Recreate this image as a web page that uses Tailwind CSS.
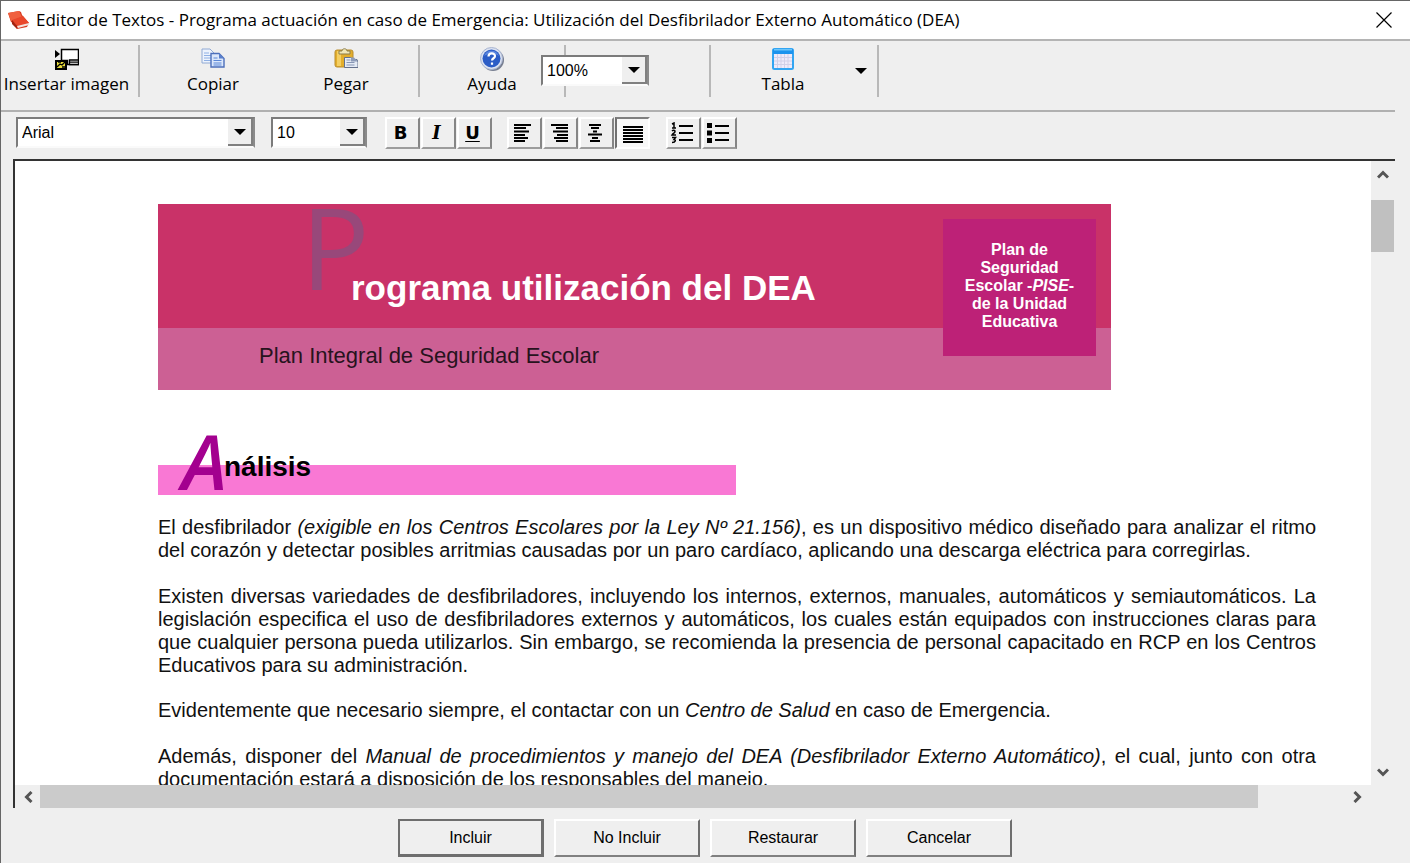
<!DOCTYPE html>
<html lang="es">
<head>
    <meta charset="UTF-8">
    <meta name="viewport" content="width=device-width, initial-scale=1.0">
    <title>Editor de Textos</title>
    <script src="https://cdn.jsdelivr.net/npm/@tailwindcss/browser@4"></script>
</head>
<body class="h-screen flex flex-col overflow-hidden bg-[#efefef] border-t border-l border-[#666] text-black font-['Liberation_Sans',Arial,sans-serif]">
    <!-- Title bar -->
    <header class="h-10 shrink-0 flex items-center justify-between bg-white border-b-2 border-[#b4b4b4] pl-1.5 pr-4">
        <div class="flex items-center gap-1.5">
            <svg class="w-[23px] h-5" viewBox="0 0 23 20">
                <path d="M1 3 12 1l2 1 1 3 7 8-2 4-10 2-2-5-4-2z" fill="#d8391f"/>
                <path d="M1 3 12 1l3 6-11 4z" fill="#f0603f"/>
                <path d="m5 10 11-4 6 7-12 3z" fill="#e9472b"/>
                <path d="m10 16 12-3v2l-11 3z" fill="#f3e4df"/>
                <path d="m5 10 5 6v3l-5-5z" fill="#a3220f"/>
            </svg>
            <h1 class="text-[17px] leading-6 whitespace-nowrap font-['Open_Sans','Noto_Sans',sans-serif]">Editor de Textos - Programa actuación en caso de Emergencia: Utilización del Desfibrilador Externo Automático (DEA)</h1>
        </div>
        <button type="button" aria-label="Cerrar" class="p-0.5">
            <svg class="w-4 h-4" viewBox="0 0 16 16" fill="none" stroke="#000" stroke-width="1.2"><path d="M.5.5l15 15M15.5.5l-15 15"/></svg>
        </button>
    </header>

    <!-- Main toolbar -->
    <nav class="h-[71px] shrink-0 mr-[15px] pt-1 flex items-start border-b-2 border-[#b0b0b0] text-[17px] leading-[26px] font-['Open_Sans','Noto_Sans',sans-serif]">
        <button type="button" class="w-[139px] h-[52px] shrink-0 pr-1.5 pt-0.5 flex flex-col items-center border-r-2 border-[#b8b8b8] whitespace-nowrap">
            <svg class="w-6 h-6 shrink-0" viewBox="0 0 24 24">
                <path d="M6.500 2.500h17v15h-11v-4h-6z" fill="#fff" stroke="#000" stroke-width="1.500"/>
                <path d="M0 3l5 4-5 4z" fill="#000"/>
                <path d="M0 6h2" stroke="#000" stroke-width="2"/>
                <path d="M1 14h10v8H1z" fill="#e8dc3c" stroke="#000" stroke-width="2"/>
                <path d="M2 20l3-3 2 1 3-3M3 15h3M7 20h3" stroke="#000" stroke-width="1.300" fill="none"/>
                <path d="M14.500 13h9v4.500h-9zM14.500 15.200h9" fill="#fff" stroke="#000" stroke-width="1.300"/>
            </svg>
            Insertar imagen
        </button>
        <button type="button" class="w-[146px] h-[52px] shrink-0 pt-0.5 flex flex-col items-center">
            <svg class="w-6 h-6 shrink-0" viewBox="0 0 24 24">
                <path d="M1 2h8l4 4v10H1z" fill="#edf3fd" stroke="#91aad4"/>
                <path d="M3 6h5M3 8.500h7M3 11h7M3 13.500h7" stroke="#8fb0e4"/>
                <path d="M10 6.500h8l5 5V20H10z" fill="#dbe7fb" stroke="#4c6fbb" stroke-width="1.400"/>
                <path d="M18 6.500v5h5z" fill="#5a80cc"/>
                <path d="M12.500 11h4M12.500 13.500h8M12.500 16h8M12.500 18h8" stroke="#5b87d6"/>
            </svg>
            Copiar
        </button>
        <button type="button" class="w-[120px] h-[52px] shrink-0 pt-0.5 flex flex-col items-center">
            <svg class="w-6 h-6 shrink-0" viewBox="0 0 24 24">
                <rect x="1" y="3" width="18" height="17" rx="2" fill="#e3ae2c" stroke="#b98d2c"/>
                <path d="M3 4h4v15H3z" fill="#f4cf63"/>
                <path d="M5 7V4h3c0-3 5-3 5 0h3v3z" fill="#f1e8b8" stroke="#8b7d4b"/>
                <path d="M10.500 10.500h6l3 2H23l1 3v5H10.500z" fill="#e5ebf5" stroke="#64718d"/>
                <path d="M12.500 13h4M12.500 15.500h8M12.500 18h8" stroke="#8796b5"/>
                <path d="M17 10.500v4h7l-4-4z" fill="#8d9cba"/>
            </svg>
            Pegar
        </button>
        <div class="w-3.5 h-[52px] shrink-0 border-r-2 border-[#b8b8b8]"></div>
        <div class="relative flex shrink-0">
            <button type="button" class="w-[146px] h-[52px] pt-0.5 flex flex-col items-center border-r-2 border-[#b8b8b8]">
                <svg class="w-6 h-6 shrink-0" viewBox="0 0 24 24">
                    <circle cx="13" cy="13" r="11" fill="#777e90"/>
                    <circle cx="11.500" cy="11.500" r="11" fill="#dbe2f1" stroke="#a8b4d0"/>
                    <circle cx="11.500" cy="11.500" r="9" fill="#2b5cc6"/>
                    <path d="M4 9a8 8 0 0 1 15 0c-4-3-10-3-15 0z" fill="#5b86df"/>
                    <path d="M8.500 9.500c0-4 6.500-4 6.500-.5 0 2.300-3 2.200-3 4.500M12 15.500v2.300" fill="none" stroke="#fff" stroke-width="2.200"/>
                </svg>
                Ayuda
            </button>
            <!-- Zoom selector sits over the separator -->
            <div class="absolute left-[121px] top-2.5 w-[108px] h-[31px] flex items-stretch bg-white border-2 border-t-[#7b7b7b] border-l-[#7b7b7b] border-b-[#fafafa] border-r-[#8a8a8a]">
                <select aria-label="Zoom" class="w-full h-full pl-1 appearance-none text-[16px] leading-6 font-['Liberation_Sans',Arial,sans-serif]">
                    <option>100%</option>
                </select>
                <span class="pointer-events-none w-[25px] shrink-0 flex items-center justify-center bg-[#efefef] border-r-2 border-b-2 border-[#808080]">
                    <svg class="w-3 h-1.5" viewBox="0 0 12 6"><path d="M0 0h12L6 6z"/></svg>
                </span>
            </div>
        </div>
        <div class="w-[145px] h-[52px] shrink-0 border-r-2 border-[#b8b8b8]"></div>
        <button type="button" class="w-[144px] h-[52px] shrink-0 pt-0.5 flex flex-col items-center">
            <svg class="w-6 h-6 shrink-0" viewBox="0 0 24 24">
                <rect x="2" y="2" width="20" height="20" rx="1.500" fill="#eeeafa" stroke="#33a5f2" stroke-width="2"/>
                <path d="M2 2h20v5H2z" fill="#1c93ee"/>
                <path d="M3 2h18v1.500H3z" fill="#6cc5fb"/>
                <path d="M6.500 7v14M10 7v14M13.500 7v14M17 7v14M3 10.500h18M3 14h18M3 17.500h18" stroke="#d2d0e8"/>
            </svg>
            Tabla
        </button>
        <button type="button" aria-label="Opciones de tabla" class="w-6 h-[52px] shrink-0 flex items-center justify-start border-r-2 border-[#b8b8b8]">
            <svg class="w-3 h-1.5" viewBox="0 0 12 6"><path d="M0 0h12L6 6z"/></svg>
        </button>
    </nav>

    <!-- Format bar -->
    <div class="h-[47px] shrink-0 pl-[15px] pt-[5px] flex items-start">
        <div class="w-[239px] h-[31px] flex items-stretch bg-white border-2 border-t-[#7b7b7b] border-l-[#7b7b7b] border-b-[#fafafa] border-r-[#8a8a8a]">
            <select aria-label="Fuente" class="flex-1 pl-1 appearance-none text-[16px] leading-6">
                <option>Arial</option>
            </select>
            <span class="pointer-events-none w-[25px] flex items-center justify-center bg-[#efefef] border-r-2 border-b-2 border-[#808080]">
                <svg class="w-3 h-1.5" viewBox="0 0 12 6"><path d="M0 0h12L6 6z"/></svg>
            </span>
        </div>
        <div class="w-24 h-[31px] ml-4 flex items-stretch bg-white border-2 border-t-[#7b7b7b] border-l-[#7b7b7b] border-b-[#fafafa] border-r-[#8a8a8a]">
            <select aria-label="Tamaño" class="flex-1 pl-1 appearance-none text-[16px] leading-6">
                <option>10</option>
            </select>
            <span class="pointer-events-none w-[25px] flex items-center justify-center bg-[#efefef] border-r-2 border-b-2 border-[#808080]">
                <svg class="w-3 h-1.5" viewBox="0 0 12 6"><path d="M0 0h12L6 6z"/></svg>
            </span>
        </div>
        <div class="flex ml-[18px] gap-px">
            <button type="button" class="w-[35px] h-8 pr-1 flex items-center justify-center border-2 border-t-white border-l-white border-r-[#858585] border-b-[#9c9c9c] font-['DejaVu_Sans',sans-serif] text-[18px] leading-5 font-bold">B</button>
            <button type="button" class="w-[35px] h-8 pr-1 flex items-center justify-center border-2 border-t-white border-l-white border-r-[#858585] border-b-[#9c9c9c] font-['DejaVu_Serif',serif] text-[18px] leading-5 font-bold italic">I</button>
            <button type="button" class="w-[35px] h-8 pr-1 flex items-center justify-center border-2 border-t-white border-l-white border-r-[#858585] border-b-[#9c9c9c] font-['DejaVu_Sans',sans-serif] text-[18px] leading-5 font-bold underline underline-offset-2">U</button>
        </div>
        <div class="flex ml-[15px] gap-px">
            <button type="button" aria-label="Alinear a la izquierda" class="w-[35px] h-8 pr-1 flex items-center justify-center border-2 border-t-white border-l-white border-r-[#858585] border-b-[#9c9c9c]">
                <svg class="w-5 h-[18px]" viewBox="0 0 20 18" stroke="#000" stroke-width="2"><path d="M1 1h17M1 4h12M1 7.500h15M1 11h11M1 14h14M1 17h11"/></svg>
            </button>
            <button type="button" aria-label="Alinear a la derecha" class="w-[35px] h-8 pr-1 flex items-center justify-center border-2 border-t-white border-l-white border-r-[#858585] border-b-[#9c9c9c]">
                <svg class="w-5 h-[18px]" viewBox="0 0 20 18" stroke="#000" stroke-width="2"><path d="M2 1h17M7 4h12M4 7.500h15M8 11h11M5 14h14M7 17h12"/></svg>
            </button>
            <button type="button" aria-label="Centrar" class="w-[35px] h-8 pr-1 flex items-center justify-center border-2 border-t-white border-l-white border-r-[#858585] border-b-[#9c9c9c]">
                <svg class="w-5 h-[18px]" viewBox="0 0 20 18" stroke="#000" stroke-width="2"><path d="M4 1h12M6 4h8M8 7.500h4M3 10.500h14M7 14h6M5 17h10"/></svg>
            </button>
            <button type="button" aria-label="Justificar" aria-pressed="true" class="w-[35px] h-8 pt-1 flex items-center justify-center bg-[#f8f8f8] border-2 border-t-[#808080] border-l-[#707070] border-r-white border-b-white">
                <svg class="w-5 h-[18px]" viewBox="0 0 20 18" stroke="#000" stroke-width="2"><path d="M0 1h20M0 4h20M0 7h20M0 10h20M0 13h20M0 16h20"/></svg>
            </button>
        </div>
        <div class="flex ml-4 gap-px">
            <button type="button" aria-label="Lista numerada" class="w-[35px] h-8 pr-1 flex items-center justify-center border-2 border-t-white border-l-white border-r-[#858585] border-b-[#9c9c9c]">
                <svg class="w-6 h-[22px]" viewBox="0 0 24 22" fill="none" stroke="#000" stroke-width="1.500">
                    <path d="M9 4h14M9 11h14M9 18h14" stroke-width="2"/>
                    <path d="M2 2l2-1v5M2 6h4M2 9c1-1 3-1 3 .5S3 11 2 13h4M2 15.500h3.500L4 17.500c2 0 2 3-2 3"/>
                </svg>
            </button>
            <button type="button" aria-label="Lista con viñetas" class="w-[35px] h-8 pr-1 flex items-center justify-center border-2 border-t-white border-l-white border-r-[#858585] border-b-[#9c9c9c]">
                <svg class="w-6 h-[22px]" viewBox="0 0 24 22">
                    <path d="M1 1h5v5H1zM1 8.500h5v5H1zM1 16h5v5H1z"/>
                    <path d="M9 4h14M9 11h14M9 18h14" stroke="#000" stroke-width="2"/>
                </svg>
            </button>
        </div>
    </div>

    <!-- Editor area -->
    <main class="flex-1 min-h-0 ml-3 mr-[15px] flex flex-col border-t-2 border-l-2 border-[#333]">
        <div class="flex-1 min-h-0 flex">
            <article class="flex-1 overflow-hidden bg-white pl-[143px] pr-[55px] pt-[43px] text-[20px] leading-[23px] text-[#111]">
                <section class="relative w-[953px] text-white">
                    <div class="h-[124px] pl-[143px] flex items-start bg-[#c93268]">
                        <span class="w-[50px] text-[114px] leading-[84px] text-[#98487a] font-['Open_Sans','Noto_Sans',sans-serif]">P</span>
                        <h2 class="relative pt-16 text-[35px] leading-10 font-bold whitespace-nowrap">rograma utilización del DEA</h2>
                    </div>
                    <p class="h-[62px] pl-[101px] pt-3 bg-[#cc6094] text-[22px] leading-8 text-[#27131d]">Plan Integral de Seguridad Escolar</p>
                    <div class="absolute right-[15px] top-[15px] w-[153px] h-[137px] pt-[22px] bg-[#bd2177] text-center text-[16px] leading-[18px] font-bold">
                        Plan de<br>Seguridad<br>Escolar -<i>PISE</i>-<br>de la Unidad<br>Educativa
                    </div>
                </section>

                <h3 class="relative mt-[37px] h-[68px] flex items-end pl-6 text-[28px] leading-8 font-bold text-black">
                    <span class="absolute left-0 bottom-0 w-[578px] h-[30px] bg-[#f978d4]"></span>
                    <span class="relative w-[42px] text-[76px] leading-[68px] font-semibold italic text-[#a3008f] font-['Open_Sans','Noto_Sans',sans-serif]">A</span>
                    <span class="relative pb-3">nálisis</span>
                </h3>

                <p class="mt-[21px]">
                    <span class="block [text-align-last:justify]">El desfibrilador <i>(exigible en los Centros Escolares por la Ley Nº 21.156)</i>, es un dispositivo médico diseñado para analizar el ritmo</span>
                    <span class="block">del corazón y detectar posibles arritmias causadas por un paro cardíaco, aplicando una descarga eléctrica para corregirlas.</span>
                </p>
                <p class="mt-[23px]">
                    <span class="block [text-align-last:justify]">Existen diversas variedades de desfibriladores, incluyendo los internos, externos, manuales, automáticos y semiautomáticos. La</span>
                    <span class="block [text-align-last:justify]">legislación especifica el uso de desfibriladores externos y automáticos, los cuales están equipados con instrucciones claras para</span>
                    <span class="block [text-align-last:justify]">que cualquier persona pueda utilizarlos. Sin embargo, se recomienda la presencia de personal capacitado en RCP en los Centros</span>
                    <span class="block">Educativos para su administración.</span>
                </p>
                <p class="mt-[22px]">Evidentemente que necesario siempre, el contactar con un <i>Centro de Salud</i> en caso de Emergencia.</p>
                <p class="mt-[23px]">
                    <span class="block [text-align-last:justify]">Además, disponer del <i>Manual de procedimientos y manejo del DEA (Desfibrilador Externo Automático)</i>, el cual, junto con otra</span>
                    <span class="block">documentación estará a disposición de los responsables del manejo.</span>
                </p>
            </article>
            <!-- Vertical scrollbar -->
            <div class="w-6 shrink-0 flex flex-col items-start">
                <button type="button" aria-label="Subir" class="w-[23px] h-[39px] pt-2 flex items-start justify-center">
                    <svg class="w-3 h-2.5" viewBox="0 0 12 10" fill="none" stroke="#555" stroke-width="3"><path d="M1 8.500l5-5 5 5"/></svg>
                </button>
                <div class="w-[23px] h-[52px] bg-[#c0c0c0]"></div>
                <button type="button" aria-label="Bajar" class="w-[23px] h-6 mt-auto flex items-center justify-center">
                    <svg class="w-3 h-2.5" viewBox="0 0 12 10" fill="none" stroke="#555" stroke-width="3"><path d="M1 1.500l5 5 5-5"/></svg>
                </button>
            </div>
        </div>
        <!-- Horizontal scrollbar -->
        <div class="h-[23px] shrink-0 flex items-stretch pr-6">
            <button type="button" aria-label="Izquierda" class="w-[25px] flex items-center justify-center">
                <svg class="w-2.5 h-3" viewBox="0 0 10 12" fill="none" stroke="#555" stroke-width="3"><path d="M8.500 1l-5 5 5 5"/></svg>
            </button>
            <div class="flex-1 mr-[87px] bg-[#cbcbcb]"></div>
            <button type="button" aria-label="Derecha" class="w-[26px] flex items-center justify-center">
                <svg class="w-2.5 h-3" viewBox="0 0 10 12" fill="none" stroke="#555" stroke-width="3"><path d="M1.500 1l5 5-5 5"/></svg>
            </button>
        </div>
    </main>

    <!-- Action buttons -->
    <footer class="h-[55px] shrink-0 pt-[11px] pr-px flex justify-center gap-2.5 text-[16px] leading-5">
        <button type="button" class="w-[146px] h-[38px] border-2 border-[#6e6e6e] border-r-[3px] border-b-[3px]">Incluir</button>
        <button type="button" class="w-[146px] h-[38px] border-2 border-t-white border-l-white border-r-[#6e6e6e] border-b-[#808080]">No Incluir</button>
        <button type="button" class="w-[146px] h-[38px] border-2 border-t-white border-l-white border-r-[#6e6e6e] border-b-[#808080]">Restaurar</button>
        <button type="button" class="w-[146px] h-[38px] border-2 border-t-white border-l-white border-r-[#6e6e6e] border-b-[#808080]">Cancelar</button>
    </footer>
</body>
</html>
